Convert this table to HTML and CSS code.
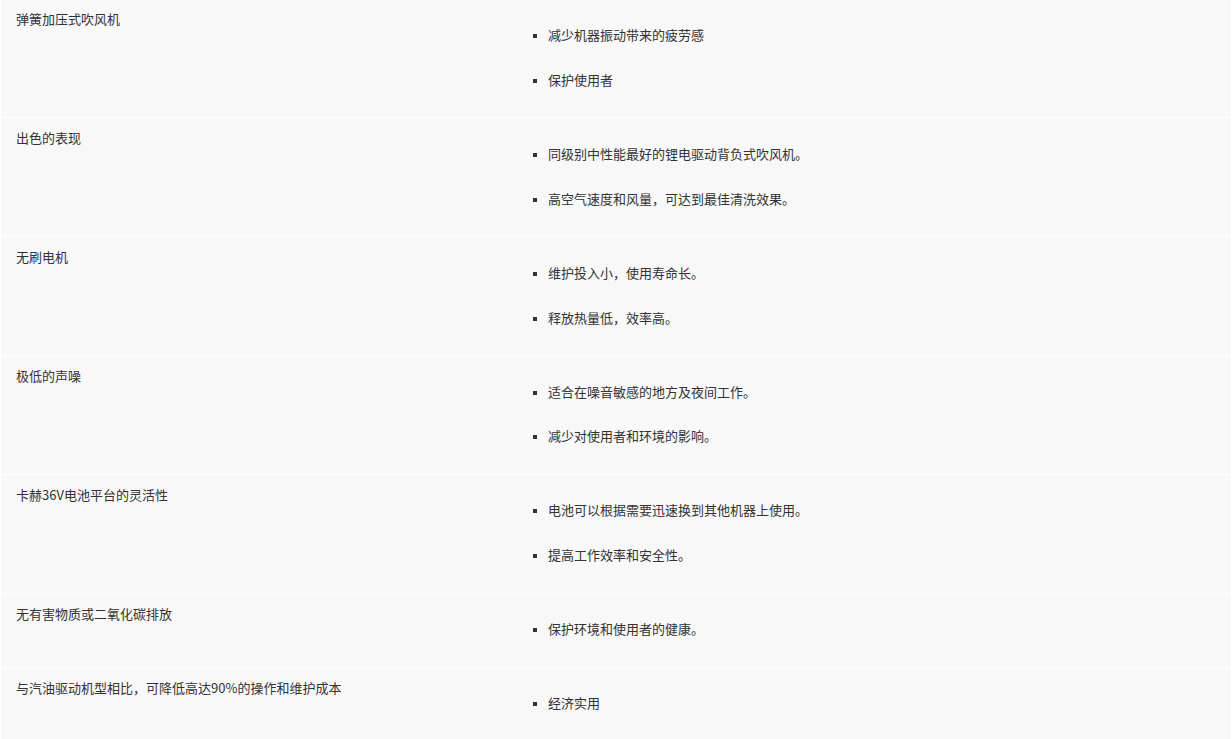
FILE: index.html
```html
<!DOCTYPE html>
<html>
<head>
    <title>产品特点</title>
    <meta charset="UTF-8">
    <meta name="viewport" content="width=device-width, initial-scale=1.0">
    <link rel="stylesheet" href="styles.css">
</head>
<body>
    <table class="feature-table">
        <tbody>
            <tr>
                <td class="feature-name">弹簧加压式吹风机</td>
                <td class="feature-desc">
                    <ul>
                        <li>减少机器振动带来的疲劳感</li>
                        <li>保护使用者</li>
                    </ul>
                </td>
            </tr>
            <tr>
                <td class="feature-name">出色的表现</td>
                <td class="feature-desc">
                    <ul>
                        <li>同级别中性能最好的锂电驱动背负式吹风机。</li>
                        <li>高空气速度和风量，可达到最佳清洗效果。</li>
                    </ul>
                </td>
            </tr>
            <tr>
                <td class="feature-name">无刷电机</td>
                <td class="feature-desc">
                    <ul>
                        <li>维护投入小，使用寿命长。</li>
                        <li>释放热量低，效率高。</li>
                    </ul>
                </td>
            </tr>
            <tr>
                <td class="feature-name">极低的声噪</td>
                <td class="feature-desc">
                    <ul>
                        <li>适合在噪音敏感的地方及夜间工作。</li>
                        <li>减少对使用者和环境的影响。</li>
                    </ul>
                </td>
            </tr>
            <tr>
                <td class="feature-name">卡赫36V电池平台的灵活性</td>
                <td class="feature-desc">
                    <ul>
                        <li>电池可以根据需要迅速换到其他机器上使用。</li>
                        <li>提高工作效率和安全性。</li>
                    </ul>
                </td>
            </tr>
            <tr>
                <td class="feature-name">无有害物质或二氧化碳排放</td>
                <td class="feature-desc">
                    <ul>
                        <li>保护环境和使用者的健康。</li>
                    </ul>
                </td>
            </tr>
            <tr>
                <td class="feature-name">与汽油驱动机型相比，可降低高达90%的操作和维护成本</td>
                <td class="feature-desc">
                    <ul>
                        <li>经济实用</li>
                    </ul>
                </td>
            </tr>
        </tbody>
    </table>
</body>
</html>
```

FILE: styles.css
```css
/* Feature table */
* { margin: 0; padding: 0; box-sizing: border-box; }

body {
    font-family: "Noto Sans CJK SC", "Noto Sans", sans-serif;
    font-size: 13px;
    color: #333;
    background: #ffffff;
    padding: 0 1px;
}

.feature-table {
    width: 100%;
    border-collapse: separate;
    border-spacing: 0 1.6px;
    margin-top: -1.6px;
}

.feature-table td {
    background: #f8f8f8;
    vertical-align: top;
}

.feature-name {
    width: 517px;
    padding: 11px 15px;
    line-height: 18px;
}

.feature-desc {
    padding: 13px 15px 15.1px 0;
}

.feature-desc ul {
    list-style: square;
    padding-left: 30px;
}

.feature-desc li {
    line-height: 19.6px;
    padding: 12.65px 0;
}

.feature-desc li::marker {
    font-size: 10px;
}
```
